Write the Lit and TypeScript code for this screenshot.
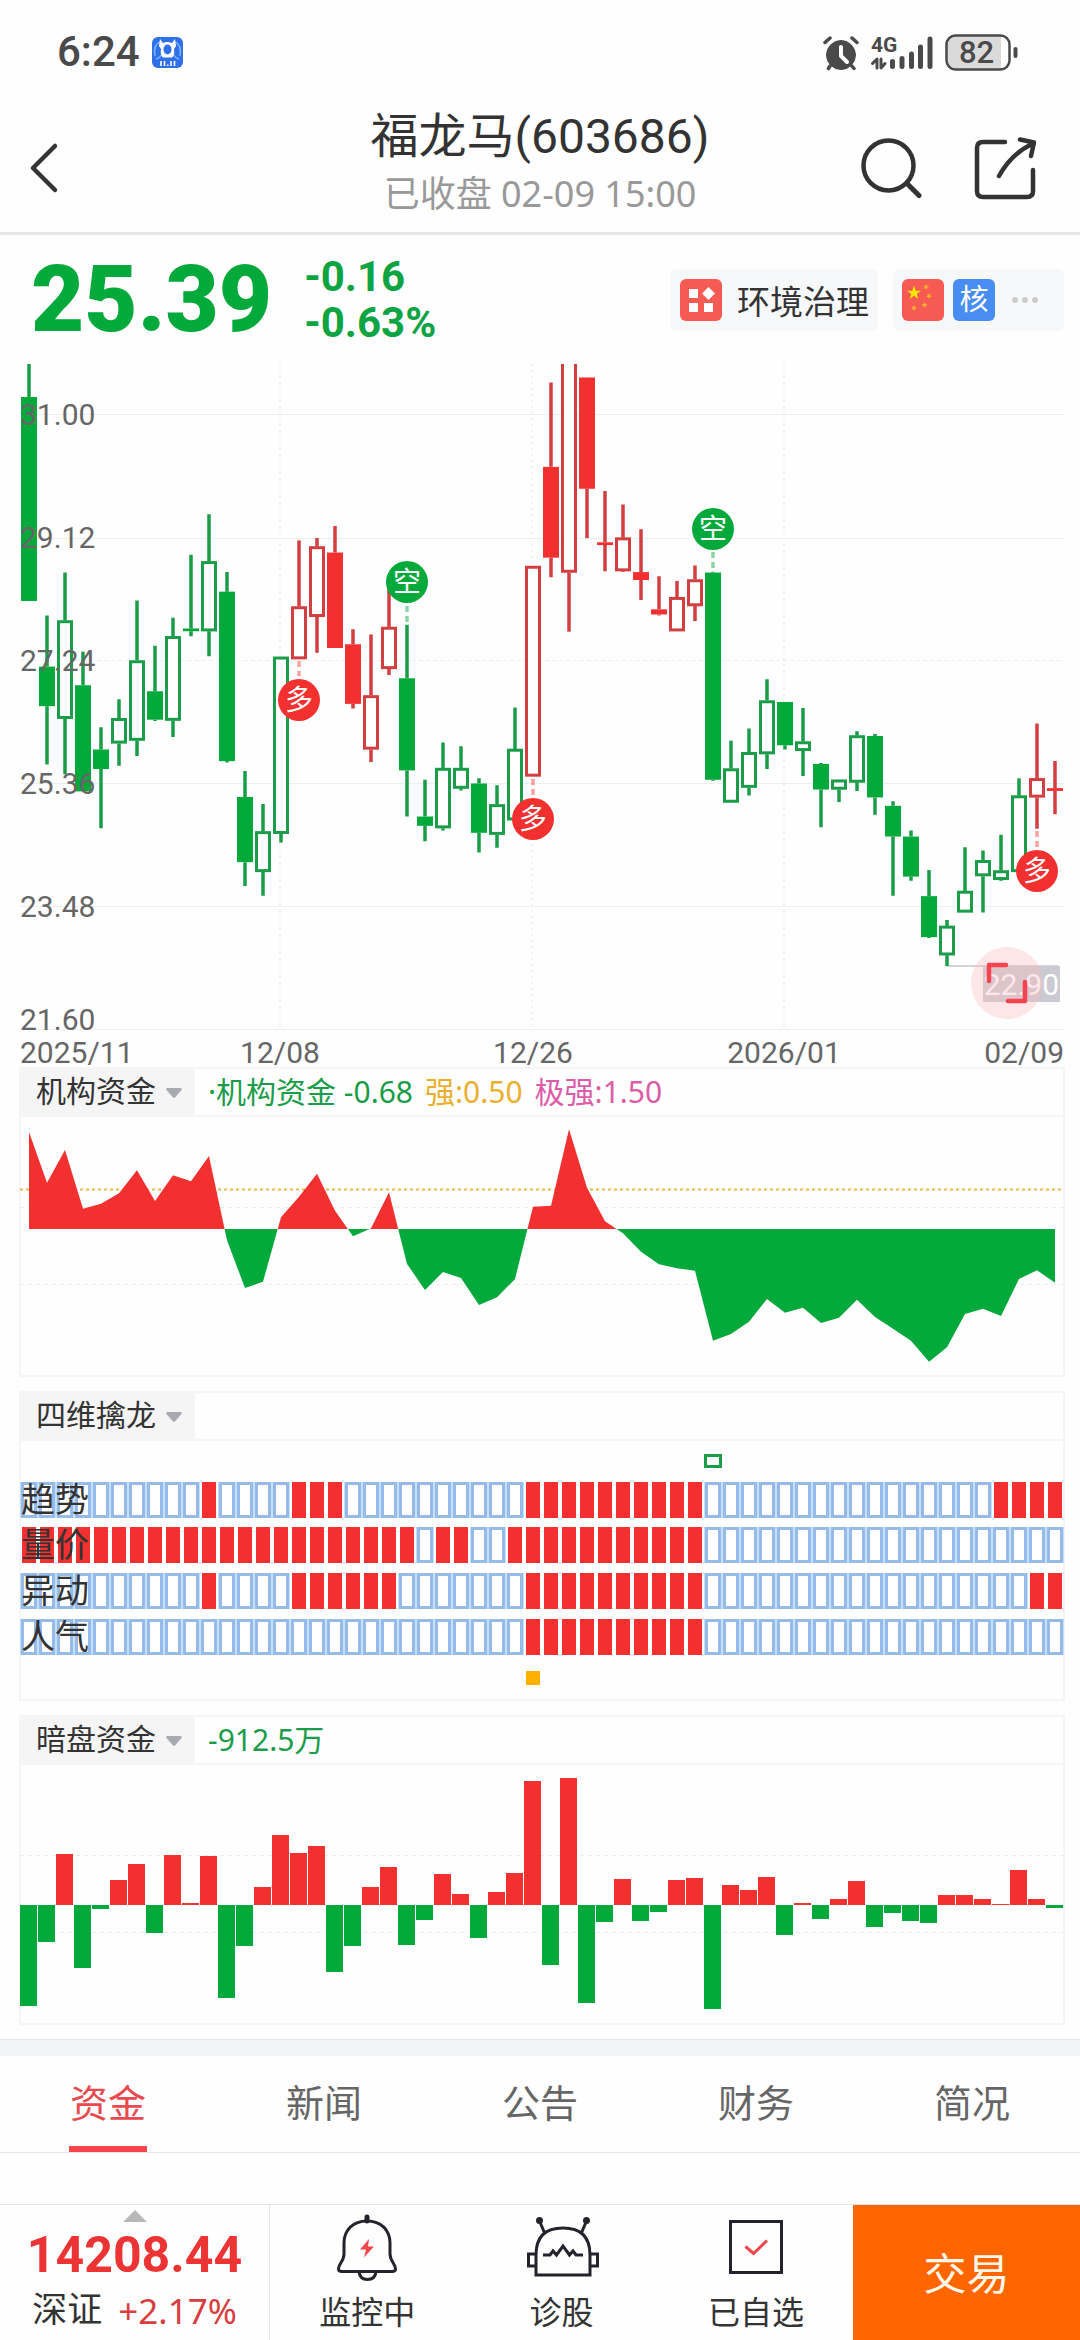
import { LitElement, html, svg, css } from "lit";
import { customElement, property } from "lit/decorators.js";

type Kind = "green" | "red";
type Candle = [high: number, top: number, bottom: number, low: number, kind: Kind, hollow: boolean];

const STEP = 18;
const FIRST = 29;
const cx = (i: number) => FIRST + i * STEP;

const G = (h: number, t: number, b: number, l: number): Candle => [h, t, b, l, "green", false];
const GH = (h: number, t: number, b: number, l: number): Candle => [h, t, b, l, "green", true];
const R = (h: number, t: number, b: number, l: number): Candle => [h, t, b, l, "red", false];
const RH = (h: number, t: number, b: number, l: number): Candle => [h, t, b, l, "red", true];

/* Depth of high, body top, body bottom and low below the chart origin. */
const CANDLES: Candle[] = [
  G(30, 101, 539, 539), G(570, 680, 765, 890), GH(478, 581, 792, 911), G(648, 720, 948, 948),
  G(810, 858, 900, 1027), GH(750, 791, 845, 893), GH(538, 667, 839, 872), G(635, 733, 794, 797),
  GH(575, 615, 796, 831), G(440, 598, 604, 615), GH(353, 454, 604, 658), G(477, 519, 883, 886),
  G(904, 960, 1100, 1151), GH(975, 1034, 1121, 1172), GH(659, 659, 1039, 1058), RH(409, 551, 664, 664),
  RH(404, 422, 573, 650), R(378, 435, 640, 640), R(600, 632, 760, 770), RH(611, 742, 858, 885),
  RH(490, 595, 685, 698), G(590, 705, 903, 1002), G(923, 1002, 1022, 1055), GH(843, 898, 1027, 1032),
  GH(851, 898, 942, 946), G(920, 931, 1037, 1079), GH(935, 976, 1041, 1069), GH(768, 857, 1010, 1010),
  RH(464, 464, 916, 916), R(70, 251, 446, 488), RH(10, 10, 478, 605), R(59, 59, 298, 404),
  R(303, 413, 419, 475), RH(332, 403, 475, 477), R(385, 477, 494, 537), R(486, 557, 568, 570),
  RH(496, 531, 604, 604), RH(463, 493, 550, 582), G(476, 478, 923, 925), GH(839, 899, 972, 972),
  GH(813, 864, 940, 957), GH(707, 753, 868, 900), G(756, 756, 849, 858), GH(769, 841, 861, 915),
  G(887, 889, 944, 1025), GH(923, 923, 944, 971), GH(819, 828, 929, 947), G(825, 829, 961, 998),
  G(969, 979, 1045, 1172), G(1032, 1045, 1131, 1140), G(1117, 1173, 1261, 1263), GH(1224, 1237, 1300, 1323),
  GH(1068, 1162, 1208, 1208), GH(1075, 1096, 1130, 1208), GH(1041, 1118, 1138, 1140), GH(920, 957, 1121, 1121),
  RH(802, 920, 961, 1028), R(883, 941, 947, 997),
];
const level = (v: number) => v * 0.4656 - 14;

const FUND = [
  216, 368, 270, 446, 431, 400, 331, 423, 346, 364, 288, 541, 684, 665, 472, 410, 341, 452, 529, 505,
  397, 612, 690, 636, 654, 735, 712, 657, 440, 437, 208, 383, 484, 520, 575, 613, 625, 632, 842, 822,
  785, 717, 758, 743, 789, 773, 719, 771, 806, 842, 905, 862, 762, 746, 768, 657, 631, 668,
];
const fundY = (v: number) => v / 3 - 57;

/* Net dark-pool flow per session, positive is an inflow. */
const DARK = [
  -101, -37, 51, -63, -4, 25, 41, -28, 50, 2, 49, -93, -41, 18, 70, 52, 59, -67, -41, 18,
  38, -40, -15, 31, 11, -33, 13, 32, 124, -60, 127, -98, -17, 26, -16, -7, 25, 27, -104, 20,
  15, 28, -30, 2, -14, 6, 24, -22, -8, -16, -18, 10, 10, 6, 1, 35, 6, -3,
];

const range = (a: number, b: number) => Array.from({ length: b - a + 1 }, (_, k) => a + k);
const SIGNALS = [
  { name: "趋势", top: 41, on: new Set([10, ...range(15, 17), ...range(28, 37), ...range(54, 57)]) },
  { name: "量价", top: 86, on: new Set([...range(0, 21), 23, 24, ...range(27, 37)]) },
  { name: "异动", top: 132, on: new Set([10, ...range(15, 20), ...range(28, 37), 56, 57]) },
  { name: "人气", top: 178, on: new Set(range(28, 37)) },
];

const BADGES = [
  { i: 15, y: 336, word: "多", kind: "red", from: 297, to: 312 },
  { i: 28, y: 455, word: "多", kind: "red", from: 415, to: 432 },
  { i: 56, y: 507, word: "多", kind: "red", from: 467, to: 484 },
  { i: 21, y: 218, word: "空", kind: "green", from: 242, to: 260 },
  { i: 38, y: 165, word: "空", kind: "green", from: 188, to: 206 },
];

@customElement("study-panel")
class StudyPanel extends LitElement {
  @property() name = "";
  static styles = css`
    :host { display: block; margin: 0 15px 14px 19px; border: 2px solid #f5f5f8; }
    .head { display: flex; align-items: center; height: 46px; border-bottom: 2px solid #f5f5f8; }
    .pick { position: relative; display: flex; width: 174px; height: 46px; background: #f5f5f5; }
    select {
      appearance: none; width: 100%; border: 0; margin: 0; padding: 0 0 0 15px; background: none;
      color: #333; font: 30px/46px Roboto, "Noto Sans CJK SC", sans-serif;
    }
    .arrow { position: absolute; right: 13px; top: 19px; width: 16px; height: 10px; pointer-events: none; }
    .values { display: flex; align-items: center; gap: 12px; margin-left: 13px; white-space: nowrap; }
  `;
  render() {
    return html`
      <div class="head">
        <label class="pick">
          <select aria-label=${this.name}><option>${this.name}</option></select>
          <svg class="arrow" viewBox="0 0 16 10"><path d="M1 0h14q1.5 1 .3 2.3L9.2 9.2q-1.2 1-2.4 0L.7 2.3Q-.5 1 1 0z" fill="#a9a9b0"/></svg>
        </label>
        <div class="values"><slot name="values"></slot></div>
      </div>
      <slot></slot>
    `;
  }
}

@customElement("app-root")
class AppRoot extends LitElement {
  static styles = css`
    :host {
      display: flex; flex-direction: column; min-height: 100vh; background: #fefefe; color: #333;
      font-family: Roboto, "Noto Sans CJK SC", sans-serif;
    }
    * { box-sizing: border-box; }
    button { border: 0; margin: 0; padding: 0; background: none; color: inherit; font: inherit; }
    svg { display: block; flex: none; }
    .green { color: #1a9c49; }
    .gold { color: #e9b030; }
    .pink { color: #dc5ca8; }

    .status { display: flex; align-items: center; height: 104px; padding: 0 62px 0 57px; color: #4a4a4a; }
    .clock { font-size: 42px; font-weight: 500; line-height: 48px; }
    .app { width: 31px; height: 31px; margin-left: 12px; }
    .signals { width: 195px; height: 38px; margin-left: auto; }

    .bar { display: flex; align-items: center; justify-content: space-between; height: 131px; padding: 0 44px 0 28px; border-bottom: 3px solid #e7e7e7; }
    .side { flex: 1; display: flex; gap: 52px; }
    .side.start { margin-right: 16px; }
    .side.end { justify-content: flex-end; }
    .title { text-align: center; padding-bottom: 8px; white-space: nowrap; }
    h1 { margin: 0; font-size: 48px; font-weight: 400; line-height: 60px; }
    .sub { margin: 0; font-family: "Noto Sans", "Noto Sans CJK SC", sans-serif; font-size: 36px; line-height: 54px; color: #999; }

    .quote { display: flex; align-items: center; height: 129px; padding: 0 16px 0 31px; }
    .price { font-size: 92px; font-weight: 900; line-height: 100px; color: #04a93b; }
    .change { margin: 0 auto 0 32px; font-size: 42px; font-weight: 700; line-height: 46px; color: #0ea343; }
    .pill { display: flex; align-items: center; gap: 9px; height: 62px; padding: 0 9px; border-radius: 6px; background: #f7f8fa; font-size: 33px; }
    .pill + .pill { margin-left: 15px; }
    .pill .name { margin-left: 6px; }
    .core { width: 42px; height: 42px; border-radius: 6px; background: #488df2; color: #fff; font-size: 29px; line-height: 42px; text-align: center; }

    .chart { position: relative; }
    .chart svg, .plot { width: 100%; height: auto; overflow: visible; }
    .axis { font-size: 30px; fill: #666; }
    .badge { font-size: 28px; fill: #fff; text-anchor: middle; }
    .low { font-size: 30px; fill: #fff; }
    .rowname { font-size: 34px; fill: #333; }
    .expand { position: absolute; right: 37px; bottom: 48px; width: 72px; height: 72px; border-radius: 36px; background: rgb(255 185 190 / 36%); }
    .value { font-family: "Noto Sans", "Noto Sans CJK SC", sans-serif; font-size: 30px; line-height: 46px; }

    .gap { height: 17px; border-top: 1px solid #e4e4e6; background: #f3f4f6; }
    .tabs { display: flex; border-bottom: 1px solid #e4e4e6; }
    .tab { flex: 1; display: flex; justify-content: center; }
    .tab span { height: 96px; padding: 0 1px; font-size: 38px; line-height: 96px; color: #666; border-bottom: 6px solid transparent; }
    .tab.on span { color: #e84a50; border-color: #f5444c; }
    .rest { flex: 1; min-height: 51px; }

    .dock { display: grid; grid-template-columns: 25fr 54fr 21fr; height: 136px; border-top: 1px solid #e4e4e6; }
    .index { display: flex; flex-direction: column; align-items: center; border-right: 1px solid #e4e4e6; padding-top: 5px; white-space: nowrap; }
    .big { font-size: 50px; font-weight: 700; line-height: 56px; color: #ec3434; margin-top: 5px; }
    .small { display: flex; gap: 16px; font-size: 35px; line-height: 56px; }
    .small b { font-family: "Noto Sans", sans-serif; font-weight: 400; color: #d83d40; }
    .tools { display: flex; }
    .tool { flex: 1; display: flex; flex-direction: column; align-items: center; padding-top: 8px; font-size: 32px; line-height: 50px; white-space: nowrap; }
    .tool span { margin-top: 7px; }
    .trade { padding-bottom: 4px; background: #ff6600; color: #fff8ea; font-size: 43px; }
  `;

  private candle(c: Candle, i: number) {
    const [h, t, b, l, kind, hollow] = c;
    const x = cx(i);
    const fill = kind === "green" ? "#04a93b" : "#f23030";
    const line = kind === "green" ? "#1a9c49" : "#d23f40";
    const [yh, yt, yb, yl] = [h, t, b, l].map(level);
    return svg`
      <path d="M${x} ${yh}V${yt}M${x} ${yb}V${yl}" stroke=${line} stroke-width="3.5"/>
      ${hollow
        ? svg`<rect x=${x - 6.5} y=${yt + 1.2} width="13" height=${Math.max(yb - yt - 2.5, 1)} fill="#fff" stroke=${line} stroke-width="3"/>`
        : svg`<rect x=${x - 8} y=${yt} width="16" height=${yb - yt} fill=${fill}/>`}
    `;
  }

  private chart() {
    const prices = ["31.00", "29.12", "27.24", "25.36", "23.48"];
    return html`
      <div class="chart">
        <svg viewBox="0 0 1080 703" role="img" aria-label="K线图">
          <clipPath id="field"><rect width="1080" height="703"/></clipPath>
          ${[50, 174, 419, 542, 665].map((y) => svg`<path d="M20 ${y + 0.5}H1064" stroke="#eeeeee"/>`)}
          <path d="M20 296.5H1064" stroke="#eeeeee" stroke-dasharray="4 3"/>
          ${[280, 532, 784].map((x) => svg`<path d="M${x} 0V665" stroke="#f2f2f4" stroke-width="2" stroke-dasharray="2 4"/>`)}
          <path d="M947 602H1058" stroke="#c3c4cb" stroke-width="1.5"/>
          <g clip-path="url(#field)">${CANDLES.map((c, i) => this.candle(c, i))}</g>
          ${prices.map((p, k) => svg`<text class="axis" x="20" y=${61 + k * 123}>${p}</text>`)}
          <text class="axis" x="20" y="666">21.60</text>
          <text class="axis" x="20" y="699">2025/11</text>
          <text class="axis" x="280" y="699" text-anchor="middle">12/08</text>
          <text class="axis" x="533" y="699" text-anchor="middle">12/26</text>
          <text class="axis" x="784" y="699" text-anchor="middle">2026/01</text>
          <text class="axis" x="1064" y="699" text-anchor="end">02/09</text>
          ${BADGES.map((b) => {
            const fill = b.kind === "red" ? "#f23030" : "#04a93b";
            return svg`
              <path d="M${cx(b.i)} ${b.from}V${b.to}" stroke=${fill} stroke-opacity=".45" stroke-width="3.5" stroke-dasharray="6 4"/>
              <circle cx=${cx(b.i)} cy=${b.y} r="21" fill=${fill}/>
              <text class="badge" x=${cx(b.i)} y=${b.y + 10}>${b.word}</text>`;
          })}
          <rect x="983" y="602" width="77" height="36" fill="#c9cad2"/>
          <text class="low" x="1059" y="631" text-anchor="end">22.90</text>
        </svg>
        <button class="expand" aria-label="全屏">
          <svg viewBox="0 0 72 72"><path d="M18 34V18H35M54 35V54H37" fill="none" stroke="#f5434f" stroke-width="4.5" stroke-linecap="round" stroke-linejoin="round"/></svg>
        </button>
      </div>
    `;
  }

  private fundPlot() {
    const pts = FUND.map((v, i) => `${cx(i)},${fundY(v)}`).join(" ");
    const area = `${cx(0)},112 ${pts} ${cx(57)},112`;
    return html`
      <svg class="plot" viewBox="21 0 1042 258" role="img" aria-label="机构资金">
        <clipPath id="up"><rect x="20" y="0" width="1044" height="112"/></clipPath>
        <clipPath id="down"><rect x="20" y="112" width="1044" height="146"/></clipPath>
        <path d="M20 90.5H1064M20 167.5H1064" stroke="#ececec" stroke-dasharray="4 4"/>
        <path d="M20 72.5H1064" stroke="#dfb94e" stroke-width="2" stroke-dasharray="3 3"/>
        <polygon points=${area} fill="#f23030" clip-path="url(#up)"/>
        <polygon points=${area} fill="#04a93b" clip-path="url(#down)"/>
      </svg>
    `;
  }

  private signalPlot() {
    return html`
      <svg class="plot" viewBox="21 0 1042 258" role="img" aria-label="四维擒龙">
        <path d="M20 90.5H1064M20 167.5H1064" stroke="#ececec" stroke-dasharray="4 4"/>
        <rect x="705.5" y="14.5" width="15" height="11" fill="#fff" stroke="#1a9c49" stroke-width="3"/>
        <rect x="526" y="230" width="14" height="14" fill="#ffb000"/>
        ${SIGNALS.map((r) => svg`
          ${range(0, 57).filter((i) => !r.on.has(i)).map((i) => svg`
            <rect x=${cx(i) - 9} y=${r.top} width="18" height="36" fill="#c3e1fc"/>
            <rect x=${cx(i) - 6.5} y=${r.top + 1.5} width="13" height="33" fill="#fff" stroke="#96bae9" stroke-width="3"/>`)}
          ${[...r.on].map((i) => svg`<rect x=${cx(i) - 7} y=${r.top} width="14" height="36" fill="#f23030"/>`)}
          <text class="rowname" x="21" y=${r.top + 30}>${r.name}</text>`)}
      </svg>
    `;
  }

  private darkPlot() {
    return html`
      <svg class="plot" viewBox="21 0 1042 258" role="img" aria-label="暗盘资金">
        <path d="M20 90.5H1064M20 167.5H1064" stroke="#ececec" stroke-dasharray="4 4"/>
        ${DARK.map((v, i) => svg`<rect x=${cx(i) - 9} y=${v > 0 ? 140 - v : 140} width="17" height=${Math.abs(v)} fill=${v > 0 ? "#f23030" : "#04a93b"}/>`)}
      </svg>
    `;
  }

  render() {
    const star = "M0-1L.225-.309.951-.309.363.118.588.809 0 .382-.588.809-.363.118-.951-.309-.225-.309z";
    return html`
      <div class="status">
        <span class="clock">6:24</span>
        <svg class="app" viewBox="0 0 31 31">
          <rect width="31" height="31" rx="6" fill="#2f6fe8"/>
          <path d="M3 19Q1 8 8 5M28 19Q30 8 23 5M4 22q4-1 6-5M27 22q-4-1-6-5" stroke="#7db0ff" stroke-width="1.5" fill="none"/>
          <path d="M8 2l3 4q4.5-2 9 0l3-4 1 7-2 3q1 6-2 8.5h-9Q8 18 9 12L7 9z" fill="#fff"/>
          <ellipse cx="15.5" cy="12.5" rx="4" ry="5" fill="#2f6fe8"/>
          <path d="M9 24v5M12.5 24v5M19 24v5M22.5 24v5M15 28.2h1.5" stroke="#fff" stroke-width="1.6"/>
        </svg>
        <svg class="signals" viewBox="823 31 195 38" role="img" aria-label="4G 82">
          <g fill="#4a4a4a" stroke="#4a4a4a" stroke-linecap="round">
            <circle cx="841" cy="53" r="14.5"/>
            <path d="M825 40.5l5-4.5M857 40.5l-5-4.5M830 64l-1.5 2.5M852 64l2 2.5" stroke-width="3.5"/>
            <path d="M841 45v9l6 6" fill="none" stroke="#fff" stroke-width="4"/>
            <path d="M892.5 59.5v5M902 56.5v8M911.5 52v12.5M920.5 45v19.5M930 37v27.5" stroke-width="5"/>
            <path d="M877 57.5v8.5M872.5 61.5l4.5-4.5M881 57v8.5M885 61.5l-4 4.5" stroke-width="3" fill="none"/>
          </g>
          <text x="871" y="50" font-size="21" font-weight="700" fill="#4a4a4a">4G</text>
          <rect x="946.5" y="33.5" width="63" height="34" rx="9" fill="#fff"/>
          <path d="M955 33.5h46v34h-46q-8.5 0-8.5-9v-16q0-9 8.5-9z" fill="#dadada"/>
          <rect x="946.5" y="33.5" width="63" height="34" rx="9" fill="none" stroke="#4a4a4a" stroke-width="2.5"/>
          <rect x="1013.5" y="45" width="4" height="11" rx="2" fill="#4a4a4a"/>
          <text x="976.5" y="61" font-size="31" font-weight="500" fill="#4a4a4a" text-anchor="middle">82</text>
        </svg>
      </div>

      <header class="bar">
        <div class="side start">
          <button aria-label="返回">
            <svg width="32" height="52" viewBox="0 0 32 52"><path d="M27 4L5 26 27 48" fill="none" stroke="#333" stroke-width="4.5" stroke-linecap="round" stroke-linejoin="round"/></svg>
          </button>
        </div>
        <div class="title">
          <h1>福龙马(603686)</h1>
          <p class="sub">已收盘 02-09 15:00</p>
        </div>
        <div class="side end">
          <button aria-label="搜索">
            <svg width="62" height="62" viewBox="0 0 62 62"><circle cx="28.5" cy="28.5" r="25" fill="none" stroke="#333" stroke-width="4.5"/><path d="M47 46.5L59 58.5" stroke="#333" stroke-width="5" stroke-linecap="round"/></svg>
          </button>
          <button aria-label="分享">
            <svg width="62" height="64" viewBox="0 0 62 64" fill="none" stroke="#333" stroke-width="4.5" stroke-linecap="round" stroke-linejoin="round">
              <path d="M31 6H9Q3 6 3 12V55Q3 61 9 61H53Q59 61 59 55V34"/>
              <path d="M25 40Q37 18 58 8M46 3.5L60 6.5 57 20"/>
            </svg>
          </button>
        </div>
      </header>

      <section class="quote">
        <span class="price">25.39</span>
        <div class="change"><div>-0.16</div><div>-0.63%</div></div>
        <button class="pill">
          <svg width="42" height="42" viewBox="0 0 42 42"><rect width="42" height="42" rx="6" fill="#f55b53"/><g fill="#fff"><rect x="9" y="10" width="9" height="9"/><rect x="9" y="24" width="9" height="9"/><rect x="24" y="24" width="9" height="9"/><path d="M28.5 8l6.5 6.5-6.5 6.5-6.5-6.5z"/></g></svg>
          <span class="name">环境治理</span>
        </button>
        <button class="pill">
          <svg width="42" height="42" viewBox="0 0 42 42"><rect width="42" height="42" rx="6" fill="#f55b53"/>
            <g fill="#ffe600"><path d=${star} transform="translate(12 14) scale(7.5)"/></g>
            <g fill="#f9b52c">
              <path d=${star} transform="translate(24 8) rotate(20) scale(3.2)"/><path d=${star} transform="translate(27 17) rotate(40) scale(3.2)"/>
              <path d=${star} transform="translate(22.5 26) scale(3.2)"/><path d=${star} transform="translate(12 29) rotate(20) scale(3.2)"/>
            </g>
          </svg>
          <span class="core">核</span>
          <svg width="42" height="8" viewBox="0 0 42 8"><g fill="#ccc"><circle cx="11" cy="4" r="3"/><circle cx="21" cy="4" r="3"/><circle cx="31" cy="4" r="3"/></g></svg>
          <span></span>
        </button>
      </section>

      ${this.chart()}

      <study-panel name="机构资金">
        <span slot="values" class="value green">·机构资金 -0.68</span>
        <span slot="values" class="value gold">强:0.50</span>
        <span slot="values" class="value pink">极强:1.50</span>
        ${this.fundPlot()}
      </study-panel>
      <study-panel name="四维擒龙">${this.signalPlot()}</study-panel>
      <study-panel name="暗盘资金">
        <span slot="values" class="value green">-912.5万</span>
        ${this.darkPlot()}
      </study-panel>

      <div class="gap"></div>
      <nav class="tabs">
        ${["资金", "新闻", "公告", "财务", "简况"].map((t, i) => html`<button class="tab ${i === 0 ? "on" : ""}"><span>${t}</span></button>`)}
      </nav>
      <div class="rest"></div>

      <footer class="dock">
        <button class="index">
          <svg width="24" height="12" viewBox="0 0 24 12"><path d="M12 0L24 12H0z" fill="#b8b8b8"/></svg>
          <span class="big">14208.44</span>
          <span class="small">深证<b>+2.17%</b></span>
        </button>
        <div class="tools">
          <button class="tool">
            <svg width="80" height="68" viewBox="0 0 80 68" fill="none" stroke="#22232b" stroke-width="3">
              <path d="M40 8C26 8 17 17 17 30V41C17 48 11.5 51 11.5 56Q11.5 58.5 15 58.5H65Q68.5 58.5 68.5 56C68.5 51 63 48 63 41V30C63 17 54 8 40 8z"/>
              <path d="M40 4V8" stroke-width="5" stroke-linecap="round"/><path d="M32 59Q33 66.5 40.5 66.5T49 59"/>
              <path d="M42 26L33 36.5H39L37 44.5 47 33.5H41z" fill="#ee474d" stroke="none"/>
            </svg>
            <span>监控中</span>
          </button>
          <button class="tool">
            <svg width="80" height="68" viewBox="0 0 80 68" fill="none" stroke="#22232b" stroke-width="3">
              <path d="M14 62V42Q14 15 41 15T68 42V62z"/><path d="M14 41H6.5V53H14M68 41H75.5V53H68"/>
              <path d="M17.5 8L23 21M64.5 8L59 21"/><circle cx="17.5" cy="7.5" r="2" fill="#22232b"/><circle cx="64.5" cy="7.5" r="2" fill="#22232b"/>
              <path d="M21 42H28L31 38 34.5 42 41 33 47.5 42 51 38 54 42H61"/>
            </svg>
            <span>诊股</span>
          </button>
          <button class="tool">
            <svg width="80" height="68" viewBox="0 0 80 68" fill="none" stroke-width="3"><rect x="14.5" y="8.5" width="51" height="51" stroke="#22232b"/><path d="M29.5 33.5L37.5 40.5 51 27.5" stroke="#ee474d"/></svg>
            <span>已自选</span>
          </button>
        </div>
        <button class="trade">交易</button>
      </footer>
    `;
  }
}
